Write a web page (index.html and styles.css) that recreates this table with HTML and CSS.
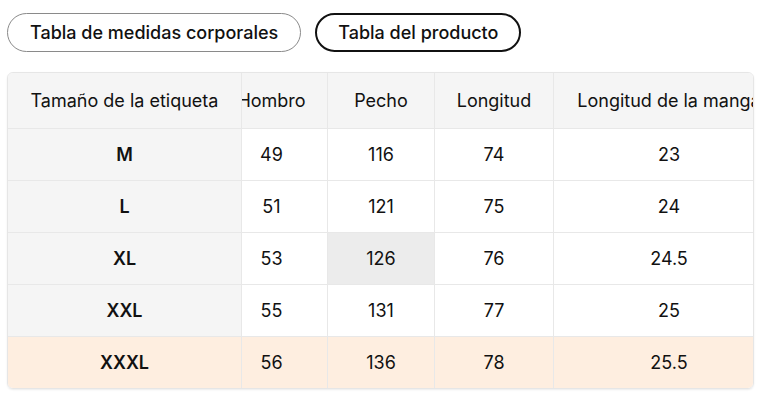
FILE: index.html
```html
<!DOCTYPE html>
<html lang="es">
<head>
<meta charset="utf-8">
<link rel="stylesheet" href="styles.css">
</head>
<body>
<div class="page">
  <div class="tabs">
    <button class="tab">Tabla de medidas corporales</button>
    <button class="tab active">Tabla del producto</button>
  </div>
  <div class="frame">
    <div class="scroller" id="scroller">
      <table class="sizes">
        <colgroup>
          <col class="c-size"><col class="c-hombro"><col class="c-pecho"><col class="c-long"><col class="c-manga">
        </colgroup>
        <thead>
          <tr>
            <th class="sticky">Tamaño de la etiqueta</th>
            <th>Hombro</th>
            <th>Pecho</th>
            <th>Longitud</th>
            <th>Longitud de la manga</th>
          </tr>
        </thead>
        <tbody>
          <tr><th class="sticky">M</th><td>49</td><td>116</td><td>74</td><td>23</td></tr>
          <tr><th class="sticky">L</th><td>51</td><td>121</td><td>75</td><td>24</td></tr>
          <tr><th class="sticky">XL</th><td>53</td><td class="hover">126</td><td>76</td><td>24.5</td></tr>
          <tr><th class="sticky">XXL</th><td>55</td><td>131</td><td>77</td><td>25</td></tr>
          <tr class="highlight"><th class="sticky">XXXL</th><td>56</td><td>136</td><td>78</td><td>25.5</td></tr>
        </tbody>
      </table>
    </div>
  </div>
</div>
<script src="script.js"></script>
</body>
</html>
```
FILE: styles.css
```css
* { box-sizing: border-box; }
html, body { margin: 0; background: #fff; }
body {
  font-family: Inter, "Noto Sans", "Liberation Sans", sans-serif;
  color: #111;
}
.page { padding: 13px 7px; }
.tabs { display: flex; gap: 14px; }
.tab {
  font: 500 18px Inter, "Liberation Sans", sans-serif;
  color: #111;
  background: #fff;
  height: 39px;
  padding: 0 22px;
  border: 1px solid #8a8a8a;
  border-radius: 20px;
}
.tab.active { border: 2px solid #111; padding: 0 21px; }
.frame {
  margin-top: 20px;
  width: 747px;
  border: 1px solid #e6e6e6;
  border-radius: 6px;
  overflow: hidden;
  box-shadow: 0 1px 2px rgba(0,0,0,0.08);
}
.scroller { overflow-x: auto; scrollbar-width: none; }
.scroller::-webkit-scrollbar { display: none; }
.sizes {
  width: 802px;
  table-layout: fixed;
  border-collapse: separate;
  border-spacing: 0;
  font-size: 18px;
}
.c-size { width: 234px; }
.c-hombro { width: 112px; }
.c-pecho { width: 107px; }
.c-long { width: 119px; }
.c-manga { width: 230px; }
.sizes th, .sizes td {
  text-align: center;
  white-space: nowrap;
  overflow: hidden;
  padding: 0;
  border: 0;
  border-right: 1px solid #e8e8e8;
  border-bottom: 1px solid #e8e8e8;
  height: 52px;
  font-weight: 400;
}
.sizes tbody tr:last-child td, .sizes tbody tr:last-child th { border-bottom: 0; height: 51px; }
.sizes td:last-child, .sizes th:last-child { border-right: 0; }
.sizes thead th { height: 56px; background: #f5f5f5; }
.sizes tbody th { font-weight: 600; }
.sticky {
  position: sticky;
  left: 0;
  z-index: 1;
  background: #f5f5f5;
}
.sizes td.hover { background: #ececec; }
.highlight td, .highlight th.sticky { background: #feeee0; }
```
FILE: script.js
```js
document.getElementById('scroller').scrollLeft = 26;
```
